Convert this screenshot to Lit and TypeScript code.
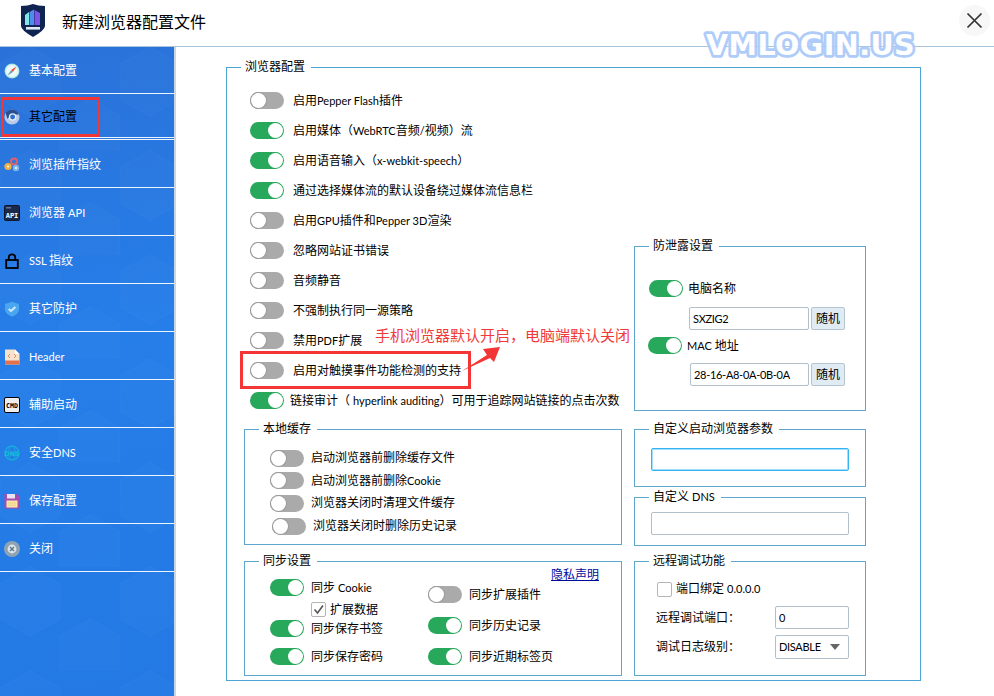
import { LitElement, html, css, svg } from "lit";
import { customElement } from "lit/decorators.js";

const icons: Record<string, unknown> = {
  compass: svg`<defs><radialGradient id="cg"><stop offset="0" stop-color="#fff"/><stop offset=".75" stop-color="#e6f7f6"/><stop offset="1" stop-color="#8fdcd6"/></radialGradient></defs>
    <circle cx="8" cy="8" r="7.5" fill="url(#cg)"/><path d="M12.4 3.6 L7 7 L9 9Z" fill="#e8503a"/><path d="M3.6 12.4 L7 7 L9 9Z" fill="#6f9fc0"/>`,
  chrome: svg`<circle cx="8" cy="8" r="7.5" fill="#b9cbe8"/><path d="M1.6 4 A7.5 7.5 0 0 1 15 5.4 L8 5.4 A3 3 0 0 0 5 8 L3.4 10Z" fill="#2b4f8e"/><circle cx="8.6" cy="8" r="3.1" fill="#2f6fd0" stroke="#e8eef8" stroke-width="1.3"/>`,
  gears: svg`<circle cx="10" cy="4.5" r="3" fill="none" stroke="#e0606a" stroke-width="2"/><circle cx="4" cy="9.5" r="3.6" fill="#f0b040"/><circle cx="4" cy="9.5" r="1" fill="#fff"/><circle cx="12" cy="11" r="3.2" fill="#7fb6ea"/><circle cx="12" cy="11" r="1.1" fill="#fff"/>`,
  api: svg`<rect x=".5" y=".5" width="15" height="15" rx="1" fill="#1b2a4a" stroke="#0d1830"/><rect x="2" y="2.2" width="5" height="1.2" fill="#6f87b0"/><text x="8" y="12.6" text-anchor="middle" font-family="DejaVu Sans Mono" font-weight="700" font-size="7" fill="#fff">API</text>`,
  lock: svg`<path d="M4.8 7V4.5a3.2 3.2 0 0 1 6.4 0V7" fill="none" stroke="#000" stroke-width="1.8"/><rect x="2.2" y="7" width="11.6" height="8" fill="none" stroke="#000" stroke-width="1.8"/>`,
  shield: svg`<path d="M8 .8 L15 3 V8 C15 12 11 14.6 8 15.6 C5 14.6 1 12 1 8 V3Z" fill="#4ba6f0"/><path d="M4.8 8 L7 10 L11.4 6" fill="none" stroke="#cfeafc" stroke-width="2"/>`,
  file: svg`<path d="M1 .5 H11 L15.5 5 V15.5 H1Z" fill="#f6e3cf"/><path d="M11 .5 L15.5 5 H11Z" fill="#fff"/><rect x="1" y="11.5" width="14.5" height="4" fill="#e5714a"/><path d="M6 5 L4 7 L6 9 M10 5 L12 7 L10 9" fill="none" stroke="#e5915e" stroke-width="1"/>`,
  cmd: svg`<rect x=".5" y=".5" width="15" height="15" rx="1.5" fill="#eee" stroke="#000"/><text x="8" y="11" text-anchor="middle" font-family="DejaVu Sans Mono" font-weight="700" font-size="6.6" fill="#000">CMD</text>`,
  dns: svg`<circle cx="8" cy="8" r="7" fill="none" stroke="#12b5d8" stroke-width="1.2"/><ellipse cx="8" cy="8" rx="3.4" ry="7" fill="none" stroke="#12b5d8" stroke-width=".8"/><text x="8" y="10.5" text-anchor="middle" font-family="DejaVu Sans" font-weight="700" font-size="6.4" fill="#12c0d8">DNS</text>`,
  save: svg`<path d="M.5 1 H13 L15.5 3.5 V15.5 H.5Z" fill="#a84bb0"/><rect x="3" y="1" width="8" height="4.5" fill="#e9e3ee"/><rect x="2.5" y="7.5" width="11" height="7" fill="#f9e9a8"/><path d="M4 10 H12 M4 12.2 H12" stroke="#e8c878" stroke-width=".8"/>`,
  close: svg`<circle cx="8" cy="8" r="8" fill="#8ea4b4"/><circle cx="8" cy="8" r="4.4" fill="#dfe6ea"/><path d="M6 6 L10 10 M10 6 L6 10" stroke="#5f7484" stroke-width="1.4"/>`,
};

const nav = [
  { icon: "compass", label: "基本配置", h: 47 },
  { icon: "chrome", label: "其它配置", h: 45, active: true },
  { icon: "gears", label: "浏览插件指纹", h: 47 },
  { icon: "api", label: "浏览器 API", h: 47 },
  { icon: "lock", label: "SSL 指纹", h: 47 },
  { icon: "shield", label: "其它防护", h: 47 },
  { icon: "file", label: "Header", h: 47 },
  { icon: "cmd", label: "辅助启动", h: 47 },
  { icon: "dns", label: "安全DNS", h: 47 },
  { icon: "save", label: "保存配置", h: 47 },
  { icon: "close", label: "关闭", h: 47 },
];

const browserRows: [boolean, string][] = [
  [false, "启用Pepper Flash插件"],
  [true, "启用媒体（WebRTC音频/视频）流"],
  [true, "启用语音输入（x-webkit-speech）"],
  [true, "通过选择媒体流的默认设备绕过媒体流信息栏"],
  [false, "启用GPU插件和Pepper 3D渲染"],
  [false, "忽略网站证书错误"],
  [false, "音频静音"],
  [false, "不强制执行同一源策略"],
  [false, "禁用PDF扩展"],
  [false, "启用对触摸事件功能检测的支持"],
];

const cacheRows: [string, number, number][] = [
  ["启动浏览器前删除缓存文件", 23, 0],
  ["启动浏览器前删除Cookie", 22, 0],
  ["浏览器关闭时清理文件缓存", 23, 0],
  ["浏览器关闭时删除历史记录", 23, 2],
];

const sw = (on: boolean) => html`<span class="sw ${on ? "on" : ""}"><i></i></span>`;

/* Latin runs are set smaller than the CJK around them, as in the reference. */
const t = (s: string) =>
  s.split(/([!-~][ -~]*)/).map((p, i) => (i % 2 ? html`<span class="en">${p}</span>` : p));

@customElement("app-root")
export class AppRoot extends LitElement {
  static styles = css`
    :host {
      display: block;
      position: relative;
      width: 994px;
      height: 696px;
      overflow: hidden;
      background: #fff;
      font: 12px/16px Lato, "Noto Sans CJK SC", sans-serif;
      color: #000;
    }
    * { box-sizing: border-box; }
    .en { font-size: 11px; }
    .head {
      height: 47px;
      display: flex;
      align-items: center;
      border-bottom: 1px solid #a9c6de;
      padding-left: 20px;
    }
    .logo { width: 26px; height: 33px; margin-top: -5px; margin-right: 16px; }
    .title { font-size: 16px; line-height: 22px; margin-top: -3px; flex: 1; }
    .x {
      width: 31px; height: 31px; border-radius: 50%; background: #f7f7f7;
      margin-right: 4px; margin-top: -5px; display: flex; align-items: center; justify-content: center;
    }
    .body { display: flex; height: 649px; }
    .side {
      width: 176px;
      border-right: 2px solid #c9d6e4;
      color: #fff;
      background-color: #247ce6;
      background-image:
        url("data:image/svg+xml,%3Csvg xmlns='http://www.w3.org/2000/svg' width='120' height='104'%3E%3Cpath d='M30 0 L60 17 V52 L30 69 L0 52 V17Z M90 52 L120 69 V104 L90 121 L60 104 V69Z' fill='%23ffffff' fill-opacity='.012' stroke='%23ffffff' stroke-opacity='.02'/%3E%3C/svg%3E"),
        linear-gradient(170deg, #2a72d9 0%, #267ee9 45%, #2479e4 100%);
    }
    .item {
      display: flex; align-items: center;
      border-bottom: 1px solid #eef5fc;
      margin-bottom: 1px;
      padding: 1px 0 0 4px;
    }
    .item svg { width: 16px; height: 16px; margin-right: 9px; flex: none; }
    .item.active { color: #000; border-bottom: 3px double #eef5fc; }
    .main { flex: 1; padding: 12px 0 0 50px; }
    fieldset { margin: 0; padding: 0; min-width: 0; display: block; }
    legend { padding: 0 6px 0 4px; line-height: 16px; }
    .outer { width: 695px; height: 622px; border: 1px solid #4ba6d4; padding: 10px 0 0 17px; display: flex; gap: 12px; }
    .outer > legend { margin-left: -3px; }
    .col { display: flex; flex-direction: column; }
    .left { width: 378px; }
    .right { width: 232px; padding-top: 153px; }
    .g { border: 1px solid #5fa6cf; }
    .sw {
      display: inline-block; position: relative; width: 34px; height: 17px; border-radius: 9px;
      background: #aaa; flex: none;
    }
    .sw i {
      position: absolute; left: 1px; top: 1px; width: 15px; height: 15px; border-radius: 50%;
      background: #fff; z-index: 1;
    }
    .sw.on { background: #27a85a; }
    .sw.on i { left: 18px; }
    .sw:not(.on)::before {
      content: ""; position: absolute; left: 0; top: 0; width: 17px; height: 17px; border-radius: 50%;
      background: #9a9a9a;
    }
    .row { display: flex; align-items: center; gap: 9px; white-space: nowrap; padding-top: 1px; }
    .brow { height: 30px; padding-left: 6px; }
    .brow.tight { gap: 6px; }
    .cache { height: 124px; margin-top: 6px; padding: 9px 0 0 25px; }
    .cache legend, .sync legend { margin-left: -11px; }
    .crow { gap: 7px; }
    .sync { height: 123px; margin-top: 8px; padding-left: 25px; display: flex; }
    .syncl { width: 158px; padding-top: 7px; }
    .syncr { width: 171px; }
    .sr { gap: 7px; }
    .cb {
      width: 15px; height: 15px; border: 1px solid #b5b5b5; border-radius: 2px; background: #fff;
      flex: none; display: flex; align-items: center; justify-content: center;
    }
    .link { color: #000a9c; text-decoration: underline; text-align: right; height: 12px; line-height: 12px; }
    .leak { height: 173px; padding: 24px 0 0 14px; }
    .leak .r { gap: 5px; height: 20px; }
    .lf { display: flex; gap: 2px; margin-left: 40px; height: 23px; margin-top: 9px; }
    .lf2 { margin: 8px 0 0 41px; }
    .r2 { margin: 5px 0 0 -1px; }
    input, .sel {
      font: inherit; font-size: 11px; letter-spacing: -.3px; color: #000; height: 23px; border: 1px solid #b2c0cb; border-radius: 2px;
      background: #fff; padding: 0 2px 0 3px; outline: none; display: block;
    }
    .lf input { flex: none; width: 120px; }
    .lf2 input { width: 119px; }
    .btn { width: 34px; height: 23px; border: 1px solid #b4c5d2; border-radius: 2px; background: #e0ebf3; text-align: center; line-height: 21px; }
    .param { height: 66px; margin-top: 10px; padding: 11px 0 0 16px; }
    .param input { width: 198px; border-color: #35b4f2; box-shadow: inset 0 0 0 1px #a5dcf7; }
    .dns { height: 57px; margin-top: 2px; padding: 7px 0 0 16px; }
    .dns input { width: 198px; }
    .param legend, .dns legend { margin-left: -2px; }
    .remote { height: 123px; margin-top: 7px; padding: 10px 0 0 21px; }
    .remote legend { margin-left: -7px; }
    .ip { gap: 4px; height: 19px; margin-left: 1px; }
    .field { display: flex; align-items: center; margin-top: 8px; }
    .field > span { width: 119px; }
    .field input, .sel { width: 74px; }
    .f3 { margin-top: 6px; }
    .sel { height: 24px; line-height: 22px; display: flex; align-items: center; justify-content: space-between; padding-right: 8px; }
    .tri { width: 0; height: 0; border: 5px solid transparent; border-top: 6px solid #666; border-bottom: 0; }
    .mark { position: absolute; left: 700px; top: 22px; width: 224px; height: 44px; opacity: .93; }
    .mark text {
      font: 700 28.5px "DejaVu Sans", sans-serif; letter-spacing: .5px;
      fill: #fff; stroke: #a9c9f9; stroke-width: 5.5px; stroke-linejoin: round; paint-order: stroke fill;
    }
    .note { position: absolute; left: 375px; top: 325px; color: #f03a3a; font-size: 15px; line-height: 20px; white-space: nowrap; }
    .redbox { position: absolute; border: 3px solid #f33535; pointer-events: none; }
    .rb1 { left: 1px; top: 97px; width: 99px; height: 40px; }
    .rb2 { left: 240px; top: 351px; width: 231px; height: 38px; }
    .arrow { position: absolute; left: 455px; top: 340px; width: 50px; height: 36px; }
  `;

  render() {
    return html`
      <div class="head">
        <svg class="logo" viewBox="0 0 26 33">
          <path d="M1 2 Q8 2 13 0 Q18 2 25 2 V22 Q25 26 13 33 Q1 26 1 22Z" fill="#0f2450"/>
          <path d="M5 11 L9 8 V21 H5Z" fill="#7fe8e6"/><path d="M9.5 8 L14 5.5 V21 H9.5Z" fill="#4f8cf0"/><path d="M14.5 6 L20 9 V21 H14.5Z" fill="#7a55e8"/>
          <rect x="6" y="23" width="14" height="2.6" fill="#dfe8f5"/>
        </svg>
        <div class="title">新建浏览器配置文件</div>
        <div class="x"><svg width="17" height="17" viewBox="0 0 17 17"><path d="M1.5 1.5 L15.5 15.5 M15.5 1.5 L1.5 15.5" stroke="#333" stroke-width="1.7"/></svg></div>
      </div>
      <div class="body">
        <nav class="side">
          ${nav.map(
            (n) => html`<div class="item ${n.active ? "active" : ""}" style="height:${n.h}px">
              <svg viewBox="0 0 16 16">${icons[n.icon]}</svg><span>${t(n.label)}</span>
            </div>`
          )}
        </nav>
        <main class="main">
          <fieldset class="outer">
            <legend>浏览器配置</legend>
            <div class="col left">
              ${browserRows.map(([on, s]) => html`<div class="row brow">${sw(on)}<span>${t(s)}</span></div>`)}
              <div class="row brow tight">${sw(true)}<span>${t("链接审计（ hyperlink auditing）可用于追踪网站链接的点击次数")}</span></div>
              <fieldset class="g cache">
                <legend>本地缓存</legend>
                ${cacheRows.map(
                  ([s, h, x]) => html`<div class="row crow" style="height:${h}px;margin-left:${x}px">${sw(false)}<span>${t(s)}</span></div>`
                )}
              </fieldset>
              <fieldset class="g sync">
                <legend>同步设置</legend>
                <div class="syncl">
                  <div class="row sr" style="height:22px">${sw(true)}<span>${t("同步 Cookie")}</span></div>
                  <div class="row" style="height:22px;gap:4px;margin-left:41px"><span class="cb"><svg width="11" height="11" viewBox="0 0 11 11"><path d="M1.5 5.5 L4.5 9 L10 1.5" fill="none" stroke="#555" stroke-width="1.6"/></svg></span><span>扩展数据</span></div>
                  <div class="row sr" style="height:16px">${sw(true)}<span>同步保存书签</span></div>
                  <div class="row sr" style="height:40px">${sw(true)}<span>同步保存密码</span></div>
                </div>
                <div class="syncr">
                  <div class="link">隐私声明</div>
                  <div class="row sr" style="height:26px">${sw(false)}<span>同步扩展插件</span></div>
                  <div class="row sr" style="height:36px">${sw(true)}<span>同步历史记录</span></div>
                  <div class="row sr" style="height:26px">${sw(true)}<span>同步近期标签页</span></div>
                </div>
              </fieldset>
            </div>
            <div class="col right">
              <fieldset class="g leak">
                <legend>防泄露设置</legend>
                <div class="row r">${sw(true)}<span>电脑名称</span></div>
                <div class="lf"><input value="SXZIG2" /><div class="btn">随机</div></div>
                <div class="row r r2">${sw(true)}<span>${t("MAC 地址")}</span></div>
                <div class="lf lf2"><input value="28-16-A8-0A-0B-0A" /><div class="btn">随机</div></div>
              </fieldset>
              <fieldset class="g param">
                <legend>自定义启动浏览器参数</legend>
                <input />
              </fieldset>
              <fieldset class="g dns">
                <legend>${t("自定义 DNS")}</legend>
                <input />
              </fieldset>
              <fieldset class="g remote">
                <legend>远程调试功能</legend>
                <div class="row ip"><span class="cb"></span><span>${t("端口绑定 0.0.0.0")}</span></div>
                <div class="field"><span>远程调试端口：</span><input value="0" /></div>
                <div class="field f3"><span>调试日志级别：</span><div class="sel">DISABLE<i class="tri"></i></div></div>
              </fieldset>
            </div>
          </fieldset>
        </main>
      </div>
      <svg class="mark" viewBox="0 0 224 44"><text x="6" y="33">VMLOGIN.US</text></svg>
      <div class="note">手机浏览器默认开启，电脑端默认关闭</div>
      <div class="redbox rb1"></div>
      <div class="redbox rb2"></div>
      <svg class="arrow" viewBox="455 340 50 36"><path d="M462 371 L487 355 L483 349 L500 347 L494 362 L490 358 Z" fill="#f33535"/></svg>
    `;
  }
}
